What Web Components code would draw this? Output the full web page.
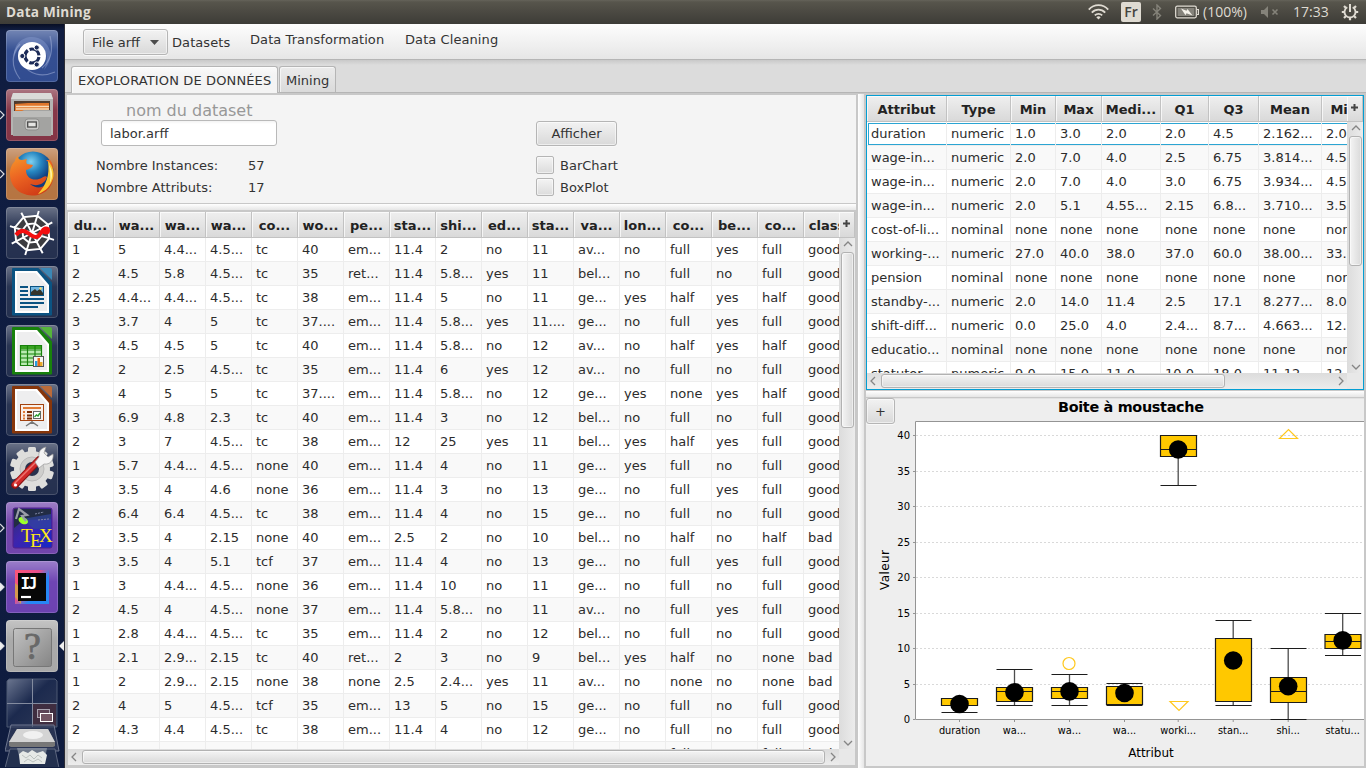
<!DOCTYPE html>
<html lang="fr">
<head>
<meta charset="utf-8">
<title>Data Mining</title>
<style>
html,body{margin:0;height:100%;overflow:hidden}
body{font:13px/16px "DejaVu Sans",sans-serif;color:#333;background:#0f1b3d}
</style>
</head>
<body>
<mining-desktop></mining-desktop>
<script>
const define=(name,html,init)=>{
  const t=document.createElement('template');t.innerHTML=html;
  customElements.define(name,class extends HTMLElement{
    constructor(){super();this.attachShadow({mode:'open'})}
    connectedCallback(){
      if(this.ready)return;this.ready=true;
      this.shadowRoot.append(t.content.cloneNode(true));
      if(init)init(this,this.shadowRoot);
    }
  });
};

/* ---------- system panel ---------- */
define('system-panel',`<style>
:host{display:flex;height:24px;align-items:center;background:linear-gradient(#65635a 0,#57554c 2px,#4b4942 50%,#3d3c37);color:#dfdbd2;font:14px/24px "Open Sans",sans-serif;box-sizing:border-box;padding:0 7px 0 6px}
b{flex:1;font-size:13.6px;letter-spacing:.2px}
svg{display:block;flex:none}
.lang{width:20px;height:20px;background:#dfdbd2;color:#45443e;border-radius:2px;text-align:center;line-height:20px;font-size:14px;margin:0 11px 0 12px;font-weight:600}
.pct{box-sizing:border-box;width:46px;margin:0 12px 0 4px;font-size:14px}
.time{box-sizing:border-box;width:37px;margin:0 11px 0 14px;font-size:14px}
</style>
<b>Data Mining</b>
<svg width="21" height="16" viewBox="0 0 21 16" fill="none" stroke="#dfdbd2" stroke-width="1.8"><path d="M.8 5.6C6-.3 15-.3 20.200 5.600M3.800 8.600c3.800-4 9.600-4 13.400 0M6.800 11.400c2.100-2.100 5.300-2.100 7.400 0"/><path d="M8.300 13.200c1.300-1.200 3.100-1.200 4.400 0l-2.200 2.400z" fill="#dfdbd2" stroke="none"/></svg>
<span class="lang">Fr</span>
<svg width="10" height="16" viewBox="0 0 10 16" fill="none" stroke="#85837a" stroke-width="1.4"><path d="M1 4.500l7.500 7L5 15V1l3.500 3.500-7.500 7"/></svg>
<svg style="margin-left:13px" width="24" height="14" viewBox="0 0 24 14"><rect x=".7" y="1.200" width="20.600" height="11.600" rx="1.500" fill="none" stroke="#dfdbd2" stroke-width="1.300"/><rect x="2.600" y="3" width="16.800" height="8" fill="#85837b"/><path d="M22 4.500h1.400v5H22" fill="none" stroke="#dfdbd2" stroke-width="1.200"/><path d="M6 3.500l5.500 2.200 1-1.700 5 6.500-6-2.200-1 2z" fill="#f4f1e9"/></svg>
<span class="pct">(100%)</span>
<svg width="18" height="12" viewBox="0 0 18 12"><path d="M0 4h3l4-4v12L3 8H0z" fill="#85837a"/><path d="M11.500 3.500l5 5m0-5l-5 5" stroke="#85837a" stroke-width="1.600"/></svg>
<span class="time">17:33</span>
<svg width="18" height="18" viewBox="-9 -9 18 18" fill="none" stroke="#dfdbd2"><path d="M-2.700-4.800a5.500 5.500 0 1 0 5.400 0" stroke-width="1.800"/><path d="M0-8V0" stroke-width="2"/><g stroke-width="2.200"><path d="M-5.500 0H-8.200M5.500 0H8.200M0 5.500V8.200M-4 4l-2 2M4 4l2 2M-4-4l-2-2M4-4l2-2"/></g></svg>`);

/* ---------- launcher ---------- */
define('launcher-tile',`<style>
:host{display:block;position:relative;width:52px;height:52px;border-radius:4px;box-sizing:border-box;background:linear-gradient(rgba(255,255,255,.35),rgba(255,255,255,.06) 40%,rgba(255,255,255,.04)),var(--tile,#1c2848);box-shadow:inset 0 0 0 1px rgba(255,255,255,.17);overflow:visible}
.in,.out{position:absolute;top:21px;width:5px;height:10px;display:none}
.in{left:-6px}.out{left:53px}
:host([running]) .in,:host([active]) .in,:host([active]) .out{display:block}
</style><slot></slot>
<svg class="in" viewBox="0 0 5 10"><path d="M0 1l4 4-4 4" fill="#16203f" stroke="#dcdde2" stroke-width="1.200"/></svg>
<svg class="out" viewBox="0 0 5 10"><path d="M5 0v10L0 5z" fill="#eee"/></svg>`,(el,r)=>{
 if(el.hasAttribute('solid'))r.querySelector('.in path').setAttribute('fill','#eee');
});
const office=(c,l,inner)=>`<path d="M7 3h25l13 14v31.500H7z" fill="${c}" stroke="${c}" stroke-width="2" stroke-linejoin="round"/><path d="M34 2h10q2 0 2 2v10z" fill="${l}"/><path d="M9 5h22l12 14v28H9z" fill="#fff"/><path d="M11 7h18.500L41 20v25H11z" fill="#eeeeef"/>${inner}`;
const gear=(()=>{let s='';for(let i=0;i<10;i++)s+=`<rect x="-4" y="-22" width="8" height="9" rx="1.500" transform="rotate(${i*36})"/>`;return s})();
const hub=(()=>{let s='';for(let i=0;i<8;i++){const a=i*Math.PI/4+.3,b=a+Math.PI/4,p=(q,r)=>(26+Math.cos(q)*r).toFixed(1)+' '+(26+Math.sin(q)*r).toFixed(1);s+=`M26 26L${p(a,23)}M${p(a,18)}L${p(b,18)}M${p(a,10)}L${p(b,10)}`}return s})();
define('unity-launcher',`<style>
:host{display:block;width:65px;height:744px;overflow:hidden;box-sizing:border-box;padding:6px 0 0 6px;background:linear-gradient(#080e24,#101d41 6px,#0f1c3f);border-right:1px solid #2c2c35}
launcher-tile{margin-bottom:7px}
svg{display:block;width:52px;height:52px}
.ws{margin-top:-2px;height:90px;width:56px;margin-left:-1px}
text{font-family:"Liberation Serif",serif}
</style>
<launcher-tile style="--tile:#29458c"><svg viewBox="0 0 52 52"><path d="M8 27C7 12 20 4 32 8c13 5 17 20 6 32C44 26 40 16 28 13 18 11 12 17 8 27z" fill="#8fa2d4" opacity=".4"/><path d="M14 49C4 36 6 22 14 14M44 6c3 12 2 24-8 32m13 4c-14 6-26 2-32-8" fill="none" stroke="#aab8dd" stroke-width="1.200" opacity=".5"/><circle cx="26" cy="26" r="14" fill="#fff"/><circle cx="26" cy="26" r="7" fill="none" stroke="#1b2a57" stroke-width="3.200" stroke-dasharray="12.660 2" stroke-dashoffset="-1"/><g fill="#1b2a57" stroke="#fff" stroke-width="1"><circle cx="16.300" cy="26" r="2.600"/><circle cx="30.700" cy="17.500" r="2.600"/><circle cx="30.700" cy="34.500" r="2.600"/></g></svg></launcher-tile>
<launcher-tile running style="--tile:#7f2c3e"><svg viewBox="0 0 52 52"><path d="M7 4h38l2 6v36H5V10z" fill="#b4b4b2"/><path d="M7 4h38l2 6H5z" fill="#dadad8"/><path d="M8 12h36v12H8z" fill="#4f3a2c"/><path d="M9 15l13-1h21v9H9z" fill="#e0762b"/><path d="M10 17.500h33M10 20h33" stroke="#f8dcb8" stroke-width="1.500"/><path d="M7 22h9l2-1h27v26H7z" fill="#a3a3a1"/><path d="M7 22h38v6H7z" fill="#bcbcba"/><rect x="19" y="30" width="14" height="11" rx="3" fill="#c9c9c7" stroke="#8d8d8b"/><rect x="21.700" y="33" width="8.600" height="5" fill="#e4e4e2" stroke="#4a4a49" stroke-width="1.300"/></svg></launcher-tile>
<launcher-tile running style="--tile:#b36f3a"><svg viewBox="0 0 52 52"><defs><radialGradient id="b" cx=".45" cy=".25"><stop stop-color="#7fd2f2"/><stop offset=".5" stop-color="#2685c0"/><stop offset="1" stop-color="#123c7c"/></radialGradient><linearGradient id="f" y2="1" x2=".5"><stop stop-color="#f59a2b"/><stop offset=".5" stop-color="#ec6422"/><stop offset="1" stop-color="#d23f17"/></linearGradient></defs><circle cx="27" cy="24" r="20.500" fill="url(#b)"/><path d="M40 12c5 4 8 9 7.500 14C48 40 37 48 26 47.500 13 47 4 38 4 26c0-6 2-10 5-13 0-2 1-4 3-5 0 3 2 4 4 4l5-1c-1 2-1 4 0 5l6 1c-1 3-4 4-7 5 0 8 7 11 13 9 4-1 6-4 8-2-2 7-10 10-17 7 7 6 17 4 21-6 2-5 4-12-1-18z" fill="url(#f)"/><path d="M42 13c6 6 7 14 4 20-3 7-8 11-14 13 8-9 12-18 10-33z" fill="#fbc52f"/><path d="M43 17c4 6 4 12 1 18 1-7 0-12-1-18z" fill="#fff3a0"/></svg></launcher-tile>
<launcher-tile><svg viewBox="0 0 52 52"><circle cx="26" cy="26" r="17" fill="#3c3c40"/><path d="${hub}" stroke="#fff" stroke-width="1.900" fill="none"/><path d="M10 28c4-5 8-5 12-2 5 4 9 6 12 1l4-5" fill="none" stroke="#f40f0f" stroke-width="4"/><circle cx="40" cy="23.500" r="4" fill="#f40f0f"/></svg></launcher-tile>
<launcher-tile><svg viewBox="0 0 52 52">${office('#0b5382','#3b87b5','<path d="M14 21h8M14 25h8M14 29h8M14 33h24M14 37h24M14 41h18" stroke="#0b5382" stroke-width="2"/><rect x="24.500" y="20.500" width="13" height="9" fill="#72b6e0" stroke="#0b5382"/><path d="M25 29v-3l4-3 2 2 3-2 3 4v2z" fill="#34342a"/><circle cx="34.500" cy="22.500" r="1.200" fill="#fd6"/>')}</svg></launcher-tile>
<launcher-tile><svg viewBox="0 0 52 52">${office('#18810c','#55b53b','<path d="M14 20h22v21H14z" fill="#b9eab1"/><path d="M14 20h22v4H14z" fill="#39a322"/><path d="M14.500 20.500h21v20h-21zM14 25h22M14 29h22M14 33h22M14 37h22M21.500 20v21M29 20v21" stroke="#18810c" stroke-width="1.200" fill="none"/><rect x="27.500" y="31.500" width="10" height="10" fill="#f5f5f5" stroke="#555"/><path d="M29 36h2.500v5H29z" fill="#269ce0"/><path d="M31.500 33H34v8h-2.500z" fill="#e66a16"/><path d="M34 37h2.500v4H34z" fill="#e8a829"/>')}</svg></launcher-tile>
<launcher-tile><svg viewBox="0 0 52 52">${office('#87360b','#bb6b3a','<rect x="14.500" y="20.500" width="23" height="16" fill="#f9efe9" stroke="#a3420f"/><path d="M17 24h18" stroke="#e07a35" stroke-width="2"/><path d="M17 28h2M17 31.500h2M17 34.500h2" stroke="#e07a35" stroke-width="1.800"/><path d="M21 28h5M21 31.500h5M21 34.500h5" stroke="#792d05" stroke-width="1.800"/><rect x="27.500" y="27.500" width="7" height="7" fill="#fff" stroke="#666"/><path d="M28.500 33l2-2 1.500 1 2-3" stroke="#2b9b30" stroke-width="1.400" fill="none"/><path d="M26 37v3m-6 2l6-4 6 4" stroke="#777" stroke-width="1.500" fill="none"/>')}</svg></launcher-tile>
<launcher-tile><svg viewBox="0 0 52 52"><g transform="translate(26 26)" fill="#dededc">${gear}<circle r="18"/><circle r="12" fill="#cececc" stroke="#bbb"/><circle r="7" fill="#28324e"/></g><path d="M9 42L33 17" stroke="#8b1414" stroke-width="7.500" stroke-linecap="round"/><path d="M9 41.500L32 18" stroke="#d12a2a" stroke-width="5.500" stroke-linecap="round"/><path d="M8 41L31 18" stroke="#ee7470" stroke-width="1.500"/><path d="M29 19l4-5c-1-5 2-9 7-10l-2 6 4 4 5-3c1 6-3 11-9 10l-5 4z" fill="#f4f4f4" stroke="#999" stroke-width=".7"/><circle cx="9.500" cy="42" r="1.600" fill="#fff"/></svg></launcher-tile>
<launcher-tile running style="--tile:#6b3ca8"><svg viewBox="0 0 52 52"><defs><linearGradient id="t" x2="1" y2="1"><stop stop-color="#303068"/><stop offset=".45" stop-color="#3d25ad"/><stop offset="1" stop-color="#1628c8"/></linearGradient></defs><rect x="7" y="6" width="39" height="40" rx="2" fill="url(#t)" stroke="#52208b"/><path d="M8 7h37v10L18 18l-10 8z" fill="#222c44"/><path d="M16 17l29-5v14l-17 1z" fill="#31469e" opacity=".7"/><ellipse cx="17.500" cy="18.500" rx="5" ry="3.300" fill="#9cff2a" transform="rotate(25 17 18)"/><path d="M10 17l3-10 8 6-5 1 4 5" stroke="#9a9da8" stroke-width="2.200" fill="none"/><path d="M29 12l9-2M32 18l11-1" stroke="#8188a5" stroke-dasharray="2 1"/><text x="15" y="40" font-size="19" fill="#ffe815">T</text><text x="24" y="45" font-size="19" fill="#ffe815">E</text><text x="33" y="40" font-size="19" fill="#ffe815">X</text></svg></launcher-tile>
<launcher-tile running solid style="--tile:#663aae"><svg viewBox="0 0 52 52"><defs><linearGradient id="i" x2="1" y2=".8"><stop stop-color="#fd5578"/><stop offset=".45" stop-color="#e64f8c"/><stop offset=".7" stop-color="#2787f5"/></linearGradient></defs><path d="M9 9h34v34H9z" fill="url(#i)"/><path d="M9 22l6 5v16l-6-7z" fill="#d49a4d"/><path d="M12 12h28v28H12z" fill="#070707"/><path d="M15 36h10" stroke="#fff" stroke-width="2.200"/><text x="14.500" y="28" font-size="16" fill="#fff" style="font-family:'DejaVu Sans Mono',monospace;font-weight:bold" textLength="17">IJ</text></svg></launcher-tile>
<launcher-tile active solid style="--tile:#a5a5a5"><svg viewBox="0 0 52 52"><defs><linearGradient id="q" y2="1"><stop stop-color="#c2c2c2"/><stop offset="1" stop-color="#858585"/></linearGradient></defs><rect x="7.500" y="8.500" width="38" height="38" rx="2" fill="url(#q)" stroke="#777"/><text x="26.500" y="39" text-anchor="middle" font-size="38" fill="#686868" stroke="#686868" stroke-width=".8">?</text></svg></launcher-tile>
<svg class="ws" viewBox="0 0 56 90"><defs><linearGradient id="w" y2="1"><stop stop-color="#6b7690"/><stop offset=".45" stop-color="#1c2a4e"/><stop offset="1" stop-color="#2e3957"/></linearGradient></defs><path d="M4 2h46l2 2v46H2V4z" fill="url(#w)" stroke="#4d5872"/><path d="M28 26h23v23H28z" fill="#3f2d40"/><path d="M27.500 2v48M2 26.500h50" stroke="#838b9f"/><rect x="32.500" y="32.500" width="12" height="8" fill="#5c4456" stroke="#a9a3b0"/><rect x="35.500" y="36.500" width="12" height="8" fill="#735664" stroke="#fff"/><path d="M6 48h43l5 26H0z" fill="#384360" fill-opacity=".6" stroke="#6e778f"/><rect x="32.500" y="32.500" width="12" height="8" fill="#5c4456" stroke="#a9a3b0"/><rect x="35.500" y="36.500" width="12" height="8" fill="#735664" stroke="#fff"/><path d="M12 52h31l7 13v4l-2 1H6l-2-1v-4z" fill="#777"/><path d="M12 52h31l7 13H4z" fill="#d4d4d4"/><ellipse cx="28" cy="58" rx="10" ry="4" fill="#f1f1f1"/><path d="M5 72h45l4 19H0z" fill="#23304f" stroke="#5f6880"/><path d="M12 71h30l-3 16H16z" fill="#a0a8b3" opacity=".6"/><path d="M14 77l4-3 5 2 4-3 5 3 6-2 4 4-2 9H15z" fill="#e6e9e7"/><path d="M17 78l4 3 4-3 4 4 4-4 4 3M19 85l4-3 5 3 5-3 4 3" stroke="#bcc2c0" fill="none"/></svg>`);

/* ---------- controls ---------- */
define('fx-button',`<style>
:host{display:inline-flex;align-items:center;justify-content:center;box-sizing:border-box;height:25px;border:1px solid #b5b5b5;border-radius:3px;background:linear-gradient(#f2f2f2,#d9d9d9);box-shadow:inset 0 0 0 1px rgba(255,255,255,.55),0 1px 0 #f9f9f9;color:#333}
</style><slot></slot>`);
define('fx-check',`<style>
:host{display:flex;align-items:center;height:18px;gap:6px}
i{width:18px;height:18px;box-sizing:border-box;border:1px solid #b5b5b5;border-radius:2px;background:linear-gradient(#f4f4f4,#dcdcdc);box-shadow:inset 0 0 0 1px rgba(255,255,255,.5)}
</style><i></i><slot></slot>`);
define('menu-strip',`<style>
:host{display:flex;align-items:flex-start;box-sizing:border-box;height:36px;padding:5px 0 0 18px;background:linear-gradient(#fdfdfd,#e6e6e6);border-bottom:1px solid #b5b5b5}
fx-button{width:85px;height:26px;gap:10px;padding-top:1px}
span{white-space:nowrap;letter-spacing:.08px}
.a{width:58px;margin:6px 0 0 4px}.b{width:134px;margin:3px 0 0 20px}.c{margin:3px 0 0 21px}
</style>
<fx-button>File arff <svg width="9" height="5"><path d="M0 0h9L4.500 5z" fill="#4d4d4d"/></svg></fx-button>
<span class="a">Datasets</span><span class="b">Data Transformation</span><span class="c">Data Cleaning</span>`);
define('tab-strip',`<style>
:host{display:flex;align-items:flex-end;gap:1px;box-sizing:border-box;height:33px;padding-left:6px;background:linear-gradient(#c9c9c9,#dcdcdc 5px,#dcdcdc);border-bottom:1px solid #b5b5b5}
span{box-sizing:border-box;height:26px;padding:6px 6px 0;border:1px solid #b5b5b5;border-bottom:0;border-radius:3px 3px 0 0;background:linear-gradient(#ebebeb,#dadada);box-shadow:inset 1px 1px 0 rgba(255,255,255,.6);white-space:nowrap}
span.on{background:linear-gradient(#fafafa,#f4f4f4 8px);height:27px;margin-bottom:-1px;letter-spacing:.13px}
.on{width:207px}.off{width:57px}
</style><span class="on">EXOPLORATION DE DONNÉES</span><span class="off">Mining</span>`);

define('dataset-form',`<style>
:host{display:grid;grid-template-columns:469px 1fr;box-sizing:border-box;height:108px;background:#f4f4f4}
.l{padding:6px 0 0 29px}
h2{margin:0 0 0 30px;font:16px/19px "DejaVu Sans",sans-serif;color:#989898}
.in{box-sizing:border-box;width:176px;height:26px;margin-left:5px;border:1px solid #b9b9b9;border-radius:3px;background:linear-gradient(#f3f3f3,#fff 3px);padding:5px 8px 3px}
dl{display:grid;grid-template-columns:152px 1fr;grid-auto-rows:22px;margin:9px 0 0;line-height:22px}dd{margin:0}
.r{padding-top:26px}
fx-button{width:81px;margin-bottom:10px}fx-check{margin-bottom:4px}
fx-check span{padding-top:1px}
</style>
<div class="l"><h2>nom du dataset</h2><div class="in">labor.arff</div><dl><dt>Nombre Instances:</dt><dd>57</dd><dt>Nombre Attributs:</dt><dd>17</dd></dl></div>
<div class="r"><fx-button>Afficher</fx-button><fx-check><span>BarChart</span></fx-check><fx-check><span>BoxPlot</span></fx-check></div>`);

/* ---------- table ---------- */
define('scroll-track',`<style>
:host{display:flex;box-sizing:border-box;background:linear-gradient(#dcdcdc,#ececec);align-items:center;padding:1px 0}
:host([vertical]){flex-direction:column;background:linear-gradient(90deg,#dcdcdc,#ececec);padding:0 1px 0 2px}
.g{flex:1}
.t{flex:none;box-sizing:border-box;align-self:stretch;border:1px solid #b2b2b2;border-radius:3px;background:linear-gradient(#f4f4f4,#dadada);box-shadow:inset 0 0 0 1px rgba(255,255,255,.5)}
:host([vertical]) .t{background:linear-gradient(90deg,#f4f4f4,#dadada)}
svg{width:14px;height:14px;flex:none;fill:none;stroke:#858585;stroke-width:1.300}
:host([vertical]) svg{transform:rotate(90deg)}
</style><svg viewBox="0 0 14 14"><path d="M8 3L4 7l4 4"/></svg><div class="t"></div><div class="g"></div><svg viewBox="0 0 14 14"><path d="M6 3l4 4-4 4"/></svg>`,(el,r)=>{
 r.querySelector('.t').style[el.hasAttribute('vertical')?'height':'width']=el.getAttribute('length')+'px';
});
const TABLES={
 instances:{cols:[46,46,46,46,46,46,46,46,46,46,46,46,46,46,46,46,47],v:176,h:743,
 head:'du... wa... wa... wa... co... wo... pe... sta... shi... ed... sta... va... lon... co... be... co... class',
 rows:`1|5|4.4...|4.5...|tc|40|em...|11.4|2|no|11|av...|no|full|yes|full|good
2|4.5|5.8|4.5...|tc|35|ret...|11.4|5.8...|yes|11|bel...|no|full|no|full|good
2.25|4.4...|4.4...|4.5...|tc|38|em...|11.4|5|no|11|ge...|yes|half|yes|half|good
3|3.7|4|5|tc|37....|em...|11.4|5.8...|yes|11....|ge...|no|full|yes|full|good
3|4.5|4.5|5|tc|40|em...|11.4|5.8...|no|12|av...|no|half|yes|half|good
2|2|2.5|4.5...|tc|35|em...|11.4|6|yes|12|av...|no|full|no|full|good
3|4|5|5|tc|37....|em...|11.4|5.8...|no|12|ge...|yes|none|yes|half|good
3|6.9|4.8|2.3|tc|40|em...|11.4|3|no|12|bel...|no|full|no|full|good
2|3|7|4.5...|tc|38|em...|12|25|yes|11|bel...|yes|half|yes|full|good
1|5.7|4.4...|4.5...|none|40|em...|11.4|4|no|11|ge...|yes|full|no|full|good
3|3.5|4|4.6|none|36|em...|11.4|3|no|13|ge...|no|full|yes|full|good
2|6.4|6.4|4.5...|tc|38|em...|11.4|4|no|15|ge...|no|full|no|full|good
2|3.5|4|2.15|none|40|em...|2.5|2|no|10|bel...|no|half|no|half|bad
3|3.5|4|5.1|tcf|37|em...|11.4|4|no|13|ge...|no|full|yes|full|good
1|3|4.4...|4.5...|none|36|em...|11.4|10|no|11|ge...|no|full|no|full|good
2|4.5|4|4.5...|none|37|em...|11.4|5.8...|no|11|av...|no|full|yes|full|good
1|2.8|4.4...|4.5...|tc|35|em...|11.4|2|no|12|bel...|no|full|no|full|good
1|2.1|2.9...|2.15|tc|40|ret...|2|3|no|9|bel...|yes|half|no|none|bad
1|2|2.9...|2.15|none|38|none|2.5|2.4...|yes|11|av...|no|none|no|none|bad
2|4|5|4.5...|tcf|35|em...|13|5|no|15|ge...|no|full|no|full|good
2|4.3|4.4|4.5...|tc|38|em...|11.4|4|no|12|ge...|no|full|no|full|good
2|2.5|3|2.15|tc|40|none|2.5|2.4...|no|10|av...|no|full|no|full|bad`},
 attributes:{cols:[80,64,45,46,59,48,50,63,50],v:130,h:344,
 head:'Attribut Type Min Max Medi... Q1 Q3 Mean Mi...',
 rows:`duration|numeric|1.0|3.0|2.0|2.0|4.5|2.162...|2.0
wage-in...|numeric|2.0|7.0|4.0|2.5|6.75|3.814...|4.5
wage-in...|numeric|2.0|7.0|4.0|3.0|6.75|3.934...|4.5
wage-in...|numeric|2.0|5.1|4.55...|2.15|6.8...|3.710...|3.5
cost-of-li...|nominal|none|none|none|none|none|none|none
working-...|numeric|27.0|40.0|38.0|37.0|60.0|38.00...|33.0
pension|nominal|none|none|none|none|none|none|none
standby-...|numeric|2.0|14.0|11.4|2.5|17.1|8.277...|8.0
shift-diff...|numeric|0.0|25.0|4.0|2.4...|8.7...|4.663...|12.0
educatio...|nominal|none|none|none|none|none|none|none
statutor...|numeric|9.0|15.0|11.0|10.0|18.0|11.12...|12.0`}
};
define('data-table',`<style>
:host{display:grid;grid-template-columns:minmax(0,1fr) 16px;grid-template-rows:26px minmax(0,1fr) 16px;background:#e8e8e8;overflow:hidden;box-sizing:border-box}
.head,.body{overflow:hidden;min-width:0}
.row{display:grid;grid-template-columns:var(--cols);height:24px;background:#fff}
.row:nth-child(even){background:#f9f9f9}
.row span{box-sizing:border-box;border-right:1px solid #ededed;border-bottom:1px solid #ededed;padding:4px 0 0 4px;white-space:nowrap;overflow:hidden;color:#2c2c2c}
.row.hd{height:26px;background:none}
.row.hd span,.plus{box-sizing:border-box;border-right:1px solid #c2c2c2;border-bottom:1px solid #c2c2c2;background:linear-gradient(#efefef,#d9d9d9);box-shadow:inset 1px 1px 0 rgba(255,255,255,.7);font-weight:bold;padding:6px 0 0;text-align:center;color:#222}
.plus svg{display:block;margin:2px 0 0 4px}
:host([focused]) .body .row:first-child span{background:linear-gradient(#2ba5d3,#2ba5d3) 0 1px/100% 1px no-repeat,linear-gradient(#2ba5d3,#2ba5d3) 0 22px/100% 1px no-repeat}
:host([focused]) .body .row:first-child span:first-child{background:linear-gradient(#2ba5d3,#2ba5d3) 1px 1px/100% 1px no-repeat,linear-gradient(#2ba5d3,#2ba5d3) 1px 22px/100% 1px no-repeat,linear-gradient(#2ba5d3,#2ba5d3) 1px 1px/1px 22px no-repeat}
</style>
<div class="head"></div><div class="plus"><svg width="7" height="7"><path d="M3.500 0v7M0 3.500h7" stroke="#444" stroke-width="2"/></svg></div>
<div class="body"></div>`,(el,r)=>{
 const d=TABLES[el.getAttribute('source')];
 el.style.setProperty('--cols',d.cols.map(c=>c+'px').join(' '));
 const row=(cells,c)=>`<div class="row ${c}">${cells.map(x=>`<span>${x}</span>`).join('')}</div>`;
 r.querySelector('.head').innerHTML=row(d.head.split(' '),'hd');
 r.querySelector('.body').innerHTML=d.rows.split('\n').map(x=>row(x.split('|'),'')).join('');
 r.querySelector('.body').insertAdjacentHTML('afterend',`<scroll-track vertical length="${d.v}"></scroll-track><scroll-track length="${d.h}"></scroll-track>`);
});

/* ---------- box plot ---------- */
define('box-plot',`<style>
:host{display:block;position:relative;background:#eee;width:498px;height:368px;overflow:hidden}
svg{display:block}fx-button{position:absolute;left:0;top:0;width:29px;height:26px;padding-top:1px}
text{font-family:"DejaVu Sans",sans-serif;fill:#000}
</style><svg width="498" height="368" viewBox="866 398 498 368"></svg><fx-button>+</fx-button>`,(el,r)=>{
 const Y=v=>719-v*7.1,R=Math.round;
 let s='<path d="M866 398.500h498" stroke="#e2e2e2"/><text x="1131" y="412" font-size="14.400" font-weight="bold" text-anchor="middle" textLength="146">Boite à moustache</text><path d="M915 421h449v298H915z" fill="#fff"/><path d="M1364 421.500H915.500V719.500H1364" fill="none" stroke="#949494"/>';
 for(let v=0;v<=40;v+=5){const y=R(Y(v))+.5;
  if(v)s+=`<path d="M916 ${y}h448" stroke="#d9d9d9" stroke-dasharray="2 2"/>`;
  s+=`<path d="M913 ${y}h2" stroke="#949494"/><text x="910" y="${y+3.500}" font-size="10" text-anchor="end">${v}</text>`}
 [['duration',1,2,2,3,3,2.16],['wa...',2,2.5,4,4.5,7,3.81],['wa...',2,3,4,4.5,6.4,3.93],['wa...',2,2.15,4.6,4.6,5.1,3.71],['worki...',33,37,38,40,40,38],['stan...',2,2.5,11.4,11.4,14,8.28],['shi...',0,2.45,4,5.9,10,4.66],['statu...',9,10,11,12,15,11.12]].forEach(([n,a,b,m,c,d,mean],i)=>{
  const x=R(958.800+i*54.900)+(i>3?0:.5)+(i>3&&i<7?.5:0),y=v=>R(Y(v))+.5;
  const cx=i>3?x-.3:x;
  s+=`<path d="M${cx} ${y(a)}V${y(b)}M${cx} ${y(c)}V${y(d)}" stroke="#4d4d4d" stroke-width="1.300"/><rect x="${x-18}" y="${y(c)}" width="36" height="${y(b)-y(c)}" fill="#ffc800"/><path d="M${x-18} ${y(c)}h36V${y(b)}h-36zM${x-18} ${y(a)}h36M${x-18} ${y(d)}h36M${x-18} ${y(m)}h36" fill="none" stroke="#1c1c1c" stroke-width="1.200"/><circle cx="${cx}" cy="${Y(mean)+.3}" r="9.300"/><path d="M${cx} 720v2" stroke="#949494"/><text x="${cx}" y="734" font-size="9.800" text-anchor="middle">${n}</text>`});
 s+='<g fill="none" stroke="#ffc81e" stroke-width="1.200"><circle cx="1069" cy="663.500" r="6"/><path d="M1170 701.500h18l-9 9zM1279.500 438.500h18l-9-9z"/></g><text x="1151" y="757" font-size="12" text-anchor="middle">Attribut</text><text transform="translate(889 570) rotate(-90)" font-size="12" text-anchor="middle" textLength="40">Valeur</text>';
 r.querySelector('svg').innerHTML=s;
});

/* ---------- desktop ---------- */
define('mining-desktop',`<style>
:host{display:grid;grid-template:24px 744px/65px 1301px;width:1366px;height:768px;overflow:hidden}
system-panel{grid-column:1/3}
main{display:grid;grid-template-rows:36px 33px 675px;min-width:0}
.split{display:flex;background:#c8c8c8;padding-top:2px;padding-left:2px;gap:2px;box-sizing:border-box}
.left{display:grid;grid-template-rows:108px 6px 553px;width:789px}
.left hr{margin:1px 0 -1px}
.left data-table{margin:3px 1px -3px}
.right{display:grid;grid-template-rows:295px 6px 368px;row-gap:1px;width:498px}
.right data-table{border:1px solid #039ed3}
hr{margin:0;border:0;background:linear-gradient(#fff,#e6e6e6)}
hr.v{width:6px;margin-top:-1px;background:linear-gradient(90deg,#fff,#e6e6e6)}
</style>
<system-panel></system-panel><unity-launcher></unity-launcher>
<main><menu-strip></menu-strip><tab-strip></tab-strip>
<div class="split"><div class="left"><dataset-form></dataset-form><hr><data-table source="instances"></data-table></div>
<hr class="v">
<div class="right"><data-table source="attributes" focused></data-table><hr><box-plot></box-plot></div></div></main>`);
</script>
</body>
</html>
